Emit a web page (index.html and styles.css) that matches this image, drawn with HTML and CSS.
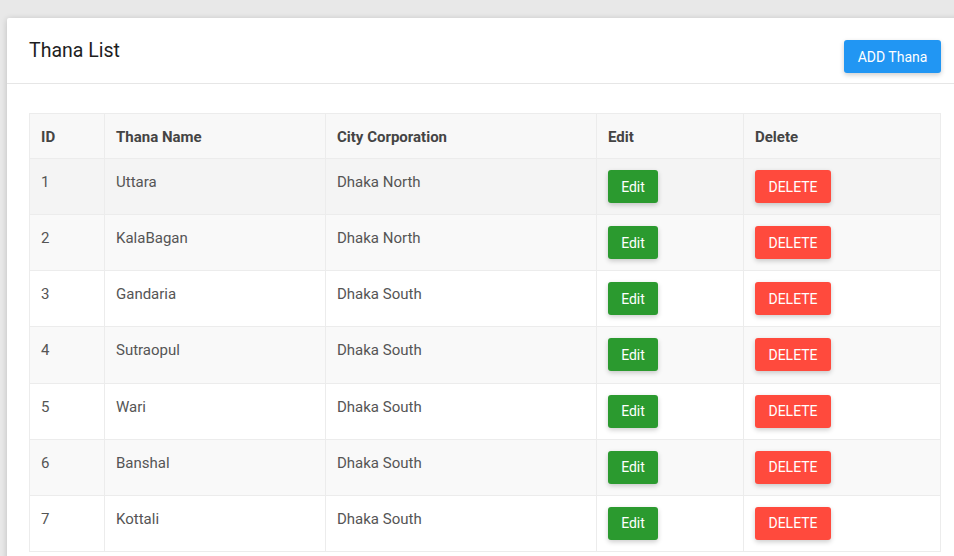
FILE: index.html
```html
<!DOCTYPE html>
<html>
<head>
<meta charset="utf-8">
<link rel="stylesheet" href="styles.css">
</head>
<body>
<div class="card">
  <div class="card-header">
    <h2 class="title">Thana List</h2>
    <button class="btn btn-add">ADD Thana</button>
  </div>
  <div class="card-body">
    <table class="grid">
      <colgroup>
        <col style="width:75px">
        <col style="width:221px">
        <col style="width:271px">
        <col style="width:147px">
        <col>
      </colgroup>
      <thead>
        <tr><th>ID</th><th>Thana Name</th><th>City Corporation</th><th>Edit</th><th>Delete</th></tr>
      </thead>
      <tbody>
        <tr class="hover"><td>1</td><td>Uttara</td><td>Dhaka North</td><td><button class="btn btn-edit">Edit</button></td><td><button class="btn btn-del">DELETE</button></td></tr>
        <tr><td>2</td><td>KalaBagan</td><td>Dhaka North</td><td><button class="btn btn-edit">Edit</button></td><td><button class="btn btn-del">DELETE</button></td></tr>
        <tr><td>3</td><td>Gandaria</td><td>Dhaka South</td><td><button class="btn btn-edit">Edit</button></td><td><button class="btn btn-del">DELETE</button></td></tr>
        <tr><td>4</td><td>Sutraopul</td><td>Dhaka South</td><td><button class="btn btn-edit">Edit</button></td><td><button class="btn btn-del">DELETE</button></td></tr>
        <tr><td>5</td><td>Wari</td><td>Dhaka South</td><td><button class="btn btn-edit">Edit</button></td><td><button class="btn btn-del">DELETE</button></td></tr>
        <tr><td>6</td><td>Banshal</td><td>Dhaka South</td><td><button class="btn btn-edit">Edit</button></td><td><button class="btn btn-del">DELETE</button></td></tr>
        <tr><td>7</td><td>Kottali</td><td>Dhaka South</td><td><button class="btn btn-edit">Edit</button></td><td><button class="btn btn-del">DELETE</button></td></tr>
      </tbody>
    </table>
  </div>
</div>
</body>
</html>
```
FILE: styles.css
```css
html, body {
  margin: 0;
  overflow: hidden;
}
body {
  background: #e8e8e8;
  padding: 18px 0 0 7px;
  font-family: Roboto, "Liberation Sans", sans-serif;
  color: #555;
}
.card {
  width: 956px;
  background: #fff;
  box-shadow: 0 1px 6px rgba(0,0,0,0.18);
  border-radius: 2px 2px 0 0;
}
.card-header {
  display: flex;
  justify-content: space-between;
  align-items: flex-start;
  padding: 22px 22px 10px 22px;
  border-bottom: 1px solid #e6e6e6;
}
.title {
  margin: 0;
  font-size: 19.5px;
  line-height: 22px;
  font-weight: 400;
  color: #1e1e1e;
}
.btn {
  border: none;
  font-family: Roboto, "Liberation Sans", sans-serif;
  font-size: 14px;
  color: #fff;
  border-radius: 3px;
  cursor: pointer;
  box-shadow: 0 2px 5px rgba(0,0,0,0.2);
}
.btn-add {
  background: #2196f3;
  height: 33px;
  width: 97px;
  padding: 0;
}
.card-body {
  padding: 29px 22px 22px 22px;
}
.grid {
  width: 912px;
  border-collapse: collapse;
  table-layout: fixed;
  border: 1px solid #dedede;
  font-size: 15px;
  line-height: 21px;
}
.grid th, .grid td {
  border: 1px solid #ececec;
  text-align: left;
  vertical-align: top;
}
.grid th {
  font-weight: 700;
  color: #444;
  background: #f8f8f8;
  padding: 13px 11px 10px 11px;
}
.grid td {
  color: #555;
  height: 33.14px;
  line-height: 25px;
  padding: 11px 11px 11px 11px;
}
.grid tbody tr:nth-child(even) td {
  background: #f9f9f9;
}
.grid tbody tr.hover td {
  background: #f4f4f4;
}
.btn-edit {
  background: #2b9a2f;
  height: 33px;
  width: 50px;
  padding: 0;
  vertical-align: top;
}
.btn-del {
  background: #ff4a3d;
  height: 33px;
  width: 76px;
  padding: 0;
  vertical-align: top;
}
```
